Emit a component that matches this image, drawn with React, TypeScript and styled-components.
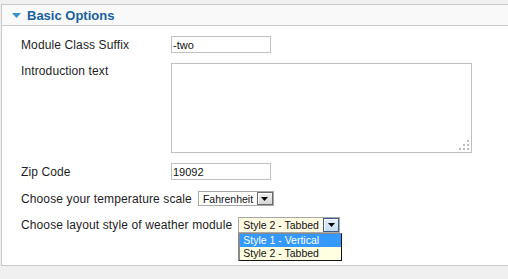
import { createGlobalStyle } from "styled-components";
import styled from "styled-components";

const GlobalStyle = createGlobalStyle`
  html, body {
    margin: 0;
    padding: 0;
    background: #f0f0f0;
    overflow: hidden;
  }
  body {
    font-family: "Liberation Sans", Arial, sans-serif;
    color: #1e1e1e;
  }
`;

const Page = styled.div`
  padding: 4px 0 0 1px;
`;

const Panel = styled.div`
  border: 1px solid #c9c9c9;
  border-right: none;
  background: #fff;
  margin-right: -20px;
`;

const Header = styled.div`
  height: 20px;
  background: #f9f9f9;
  border-bottom: 1px solid #c9c9c9;
  display: flex;
  align-items: center;
  gap: 6px;
  padding-left: 10px;
`;

const Title = styled.h3`
  margin: 0;
  font-size: 13px;
  font-weight: bold;
  color: #18609f;
`;

const Body = styled.div`
  padding: 10px 0 32px 19px;
  display: flex;
  flex-direction: column;
  gap: 10px;
`;

const Row = styled.div<{ $top?: boolean; $extra?: number }>`
  display: flex;
  align-items: ${(p) => (p.$top ? "flex-start" : "center")};
  margin-top: ${(p) => p.$extra ?? 0}px;
`;

const Label = styled.label<{ $shift?: number }>`
  min-width: 144px;
  margin-right: 6px;
  font-size: 12px;
  line-height: 14px;
  letter-spacing: 0.12px;
  white-space: nowrap;
  margin-top: ${(p) => p.$shift ?? 0}px;
`;

const TextInput = styled.input`
  box-sizing: border-box;
  width: 100px;
  height: 17px;
  border: 1px solid #c0c0c0;
  padding: 0 1px;
  margin: 0;
  font-family: "Liberation Sans", Arial, sans-serif;
  font-size: 11px;
  color: #111;
  outline: none;
`;

const AreaWrap = styled.div`
  position: relative;
  width: 301px;
  height: 90px;
`;

const Area = styled.textarea`
  box-sizing: border-box;
  width: 100%;
  height: 100%;
  border: 1px solid #c0c0c0;
  margin: 0;
  resize: none;
  display: block;
  outline: none;
`;

const Grip = styled.svg`
  position: absolute;
  right: 3px;
  bottom: 3px;
`;

const SelectWrap = styled.div`
  position: relative;
`;

const Select = styled.div<{ $w: number; $h: number; $bg: string }>`
  box-sizing: border-box;
  width: ${(p) => p.$w}px;
  height: ${(p) => p.$h}px;
  border: 1px solid #a8a8a8;
  background: ${(p) => p.$bg};
  display: flex;
  align-items: center;
  justify-content: space-between;
  padding: 0 0 0 4px;
  font-size: 10.5px;
  color: #111;
  white-space: nowrap;
`;

const SelectButton = styled.div<{ $hot?: boolean }>`
  box-sizing: border-box;
  width: 16px;
  height: 100%;
  flex-shrink: 0;
  border: 1px solid ${(p) => (p.$hot ? "#3c5f8a" : "#6a6a6a")};
  box-shadow: inset 1px 1px 0 #fff;
  background: ${(p) =>
    p.$hot
      ? "linear-gradient(#e6f0fa, #c6daf0)"
      : "linear-gradient(#f0f0f0, #d6d6d6)"};
  display: flex;
  align-items: center;
  justify-content: center;
`;

const List = styled.div`
  position: absolute;
  top: 100%;
  left: 0;
  width: 104px;
  box-sizing: border-box;
  border: 1px solid #111;
  border-left: 2px solid #8a8a8a;
  border-top: 1px solid #8a8a8a;
  background: #ffffe1;
  font-size: 10.5px;
`;

const Option = styled.div<{ $active?: boolean }>`
  height: 13px;
  line-height: 13px;
  padding-left: 3px;
  background: ${(p) => (p.$active ? "#3399ff" : "#ffffe1")};
  color: ${(p) => (p.$active ? "#fff" : "#111")};
  white-space: nowrap;
`;

const Arrow = () => (
  <svg width="7" height="4" viewBox="0 0 7 4">
    <path d="M0 0h7L3.5 4z" fill="#000" />
  </svg>
);

export default function App() {
  return (
    <>
      <GlobalStyle />
      <Page>
        <Panel>
          <Header>
            <svg width="9" height="5" viewBox="0 0 9 5">
              <path d="M0 0h9L4.5 5z" fill="#3592cf" />
            </svg>
            <Title>Basic Options</Title>
          </Header>
          <Body>
            <Row>
              <Label>Module Class Suffix</Label>
              <TextInput defaultValue="-two" />
            </Row>
            <Row $top>
              <Label $shift={1}>Introduction text</Label>
              <AreaWrap>
                <Area />
                <Grip width="10" height="10" viewBox="0 0 10 10">
                  <g fill="#bcbcbc">
                    <rect x="8" y="0" width="2" height="2" />
                    <rect x="4" y="4" width="2" height="2" />
                    <rect x="8" y="4" width="2" height="2" />
                    <rect x="0" y="8" width="2" height="2" />
                    <rect x="4" y="8" width="2" height="2" />
                    <rect x="8" y="8" width="2" height="2" />
                  </g>
                </Grip>
              </AreaWrap>
            </Row>
            <Row>
              <Label>Zip Code</Label>
              <TextInput defaultValue="19092" />
            </Row>
            <Row $extra={1}>
              <Label>Choose your temperature scale</Label>
              <Select $w={76} $h={15} $bg="#fff">
                <span>Fahrenheit</span>
                <SelectButton>
                  <Arrow />
                </SelectButton>
              </Select>
            </Row>
            <Row $extra={1}>
              <Label>Choose layout style of weather module</Label>
              <SelectWrap>
                <Select $w={102} $h={16} $bg="#fffbe3">
                  <span>Style 2 - Tabbed</span>
                  <SelectButton $hot>
                    <Arrow />
                  </SelectButton>
                </Select>
                <List>
                  <Option $active>Style 1 - Vertical</Option>
                  <Option>Style 2 - Tabbed</Option>
                </List>
              </SelectWrap>
            </Row>
          </Body>
        </Panel>
      </Page>
    </>
  );
}
